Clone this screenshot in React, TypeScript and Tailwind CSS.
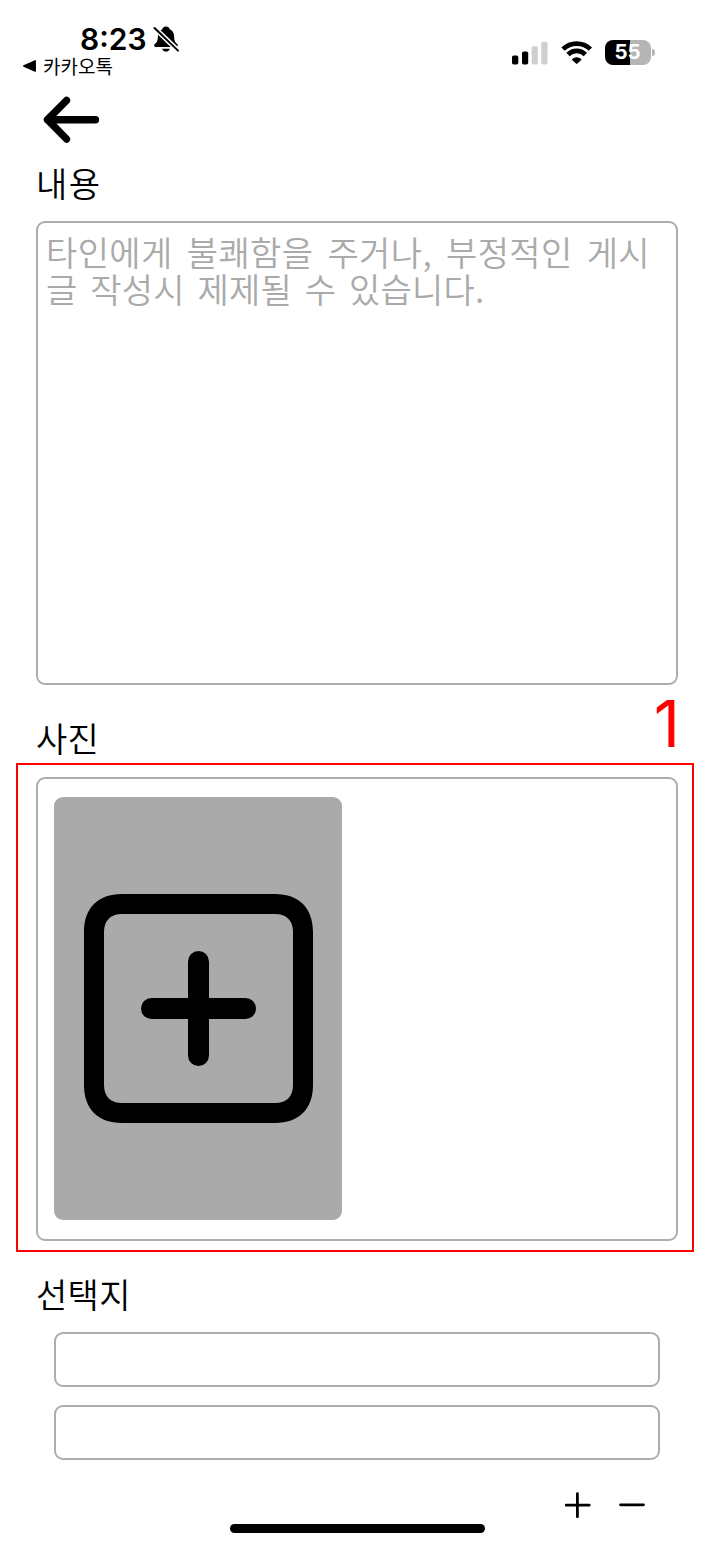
import type { ReactNode } from "react";

const BODY_FONT = "font-['Noto_Sans_CJK_KR',sans-serif]";

function BellOff() {
  return (
    <svg className="h-7 w-[26px]" viewBox="0 0 26 28" aria-hidden="true">
      <path
        d="M13 1.500c-1.900 0-3.400 1.100-3.700 2.700C6.300 5.500 5 8 4.900 11.200c-.1 4.400-.9 5.800-2.600 7.400-.9.900-1.100 1.500-1.100 2 0 .9.700 1.400 1.600 1.400h20.400c.9 0 1.600-.5 1.600-1.400 0-.5-.2-1.100-1.100-2-1.700-1.600-2.500-3-2.600-7.400C21 8 19.700 5.500 16.700 4.200 16.400 2.600 14.900 1.500 13 1.500zM9.200 23.700h7.600c-.4 1.700-1.900 2.900-3.800 2.900s-3.400-1.200-3.800-2.900z"
        fill="black"
      />
      <path d="M0 1.500 26 26.500" stroke="white" strokeWidth="5" />
      <path d="M1.500 3 25 25.600" stroke="black" strokeWidth="2" strokeLinecap="round" />
    </svg>
  );
}

function Signal() {
  return (
    <svg className="h-6 w-9" viewBox="0 0 36 24" aria-hidden="true">
      <rect x="0" y="14.500" width="6.300" height="9" rx="1.700" fill="black" />
      <rect x="10" y="10.500" width="6.200" height="13" rx="1.700" fill="black" />
      <rect x="19.700" y="5.300" width="6.200" height="18.200" rx="1.700" fill="#cfcfcf" />
      <rect x="29.300" y="0.700" width="6.200" height="22.800" rx="1.700" fill="#cfcfcf" />
    </svg>
  );
}

function Wifi() {
  return (
    <svg className="h-6 w-8" viewBox="0 0 32 24" aria-hidden="true">
      <g fill="none" stroke="black" strokeWidth="4.600">
        <path d="M2 8.200a19.500 19.500 0 0 1 27.400 0" />
        <path d="M7 13.500a12.300 12.300 0 0 1 17.400 0" />
      </g>
      <path d="M11.200 18a6.400 6.400 0 0 1 9 0c.3.300.3.600 0 .9l-3.800 3.700c-.4.400-1 .400-1.400 0l-3.800-3.700c-.3-.3-.3-.6 0-.9z" fill="black" />
    </svg>
  );
}

function Battery() {
  return (
    <div className="flex items-center gap-[1px]">
      <div className="flex h-[25px] w-[46px] items-center justify-center rounded-[8px] bg-[linear-gradient(90deg,#000_54%,#b5b5b5_54%)] pr-px font-[Inter,sans-serif] text-[20.500px] font-bold leading-none text-white">
        55
      </div>
      <div className="h-[7px] w-[2.500px] rounded-r-full bg-[#b5b5b5]" />
    </div>
  );
}

function StatusBar() {
  return (
    <div className="flex h-[88px] justify-between">
      <div className="flex flex-col pl-[22px] pt-[25px]">
        <div className="flex h-7 items-center gap-[6px] pl-[58px]">
          <span className="font-[Inter,sans-serif] text-[30px] font-semibold leading-7">8:23</span>
          <BellOff />
        </div>
        <div className="flex h-[26px] items-center gap-[6px]">
          <svg className="h-[14px] w-[15px]" viewBox="0 0 15 14" aria-hidden="true">
            <path d="M1.800 7 13.200 1.900v10.200z" fill="black" stroke="black" strokeWidth="1.500" strokeLinejoin="round" />
          </svg>
          <span className={`${BODY_FONT} text-[19px] leading-[26px]`}>카카오톡</span>
        </div>
      </div>
      <div className="mt-10 flex h-[25px] w-[202px] items-center">
        <Signal />
        <div className="ml-[13px] flex"><Wifi /></div>
        <div className="ml-3"><Battery /></div>
      </div>
    </div>
  );
}

function Label({ children }: { children: ReactNode }) {
  return <h2 className={`${BODY_FONT} h-9 text-[34px] font-[350] leading-[34px] tracking-[0.3px]`}>{children}</h2>;
}

function AddPhoto() {
  return (
    <button className="flex h-[423px] w-72 items-center justify-center rounded-[9px] bg-[#aaaaaa]" aria-label="사진 추가">
      <svg className="size-[229px]" viewBox="0 0 229 229" aria-hidden="true">
        <path
          fillRule="evenodd"
          d="M38 0H191C215 0 229 14 229 38V191C229 215 215 229 191 229H38C14 229 0 215 0 191V38C0 14 14 0 38 0ZM38 20C26 20 20 27 20 38V191C20 202 26 209 38 209H191C203 209 209 202 209 191V38C209 27 203 20 191 20Z"
        />
        <path d="M114.500 67.500v94M67.500 114.500h94" stroke="black" strokeWidth="21" strokeLinecap="round" />
      </svg>
    </button>
  );
}

export default function App() {
  return (
    <main className="flex h-[1547px] w-[714px] flex-col overflow-hidden bg-white text-black">
      <StatusBar />
      <header className="flex h-[78px] pl-[43px] pt-[8px]">
        <svg className="h-[48px] w-[57px]" viewBox="0 0 57 48" aria-hidden="true">
          <path d="M23.500 4.500 4.500 23.700 23.500 43M4.500 23.700h48" fill="none" stroke="black" strokeWidth="7.400" strokeLinecap="round" strokeLinejoin="round" />
        </svg>
      </header>

      <section className="flex flex-col px-9">
        <Label><span className="tracking-[1.500px]">내용</span></Label>
        <div className={`${BODY_FONT} mt-[19px] h-[464px] rounded-[9px] border-2 border-[#adadad] px-2 pt-[11px] text-[34px] font-[350] leading-[36.500px] text-[#aaaaaa]`}>
          <p className="whitespace-nowrap tracking-[0.4px] [word-spacing:6px]">타인에게 불쾌함을 주거나, 부정적인 게시</p>
          <p className="whitespace-nowrap tracking-[0.200px] [word-spacing:5px]">글 작성시 제제될 수 있습니다.</p>
        </div>
      </section>

      <section className="mt-9 flex flex-col px-9">
        <Label>사진</Label>
        <div className="relative mt-5 h-[464px] rounded-[9px] border-2 border-[#adadad] pl-4 pt-[18px]">
          <AddPhoto />
          <div className="pointer-events-none absolute -bottom-[13px] -left-[22px] -right-[18px] -top-4 border-2 border-[#ff0000]" />
          <span className="absolute -top-[87px] right-[-4px] font-[Inter,sans-serif] text-[64.500px] leading-[65px] text-[#ff0000]">1</span>
        </div>
      </section>

      <section className="mt-9 flex flex-col px-9">
        <Label>선택지</Label>
        <div className="mt-[19px] flex flex-col gap-[18px] px-[18px]">
          <input className="h-[55px] rounded-[9px] border-2 border-[#adadad]" aria-label="선택지 1" />
          <input className="h-[55px] rounded-[9px] border-2 border-[#adadad]" aria-label="선택지 2" />
        </div>
      </section>

      <div className="mt-8 flex justify-end gap-[28px] pr-[69px]">
        <svg className="size-[26px]" viewBox="0 0 26 26" aria-hidden="true">
          <path d="M12.400 1.700v23M1.200 13.200h23" stroke="black" strokeWidth="2.800" strokeLinecap="round" />
        </svg>
        <svg className="size-[26px]" viewBox="0 0 26 26" aria-hidden="true">
          <path d="M1.500 12.800h23" stroke="black" strokeWidth="2.800" strokeLinecap="round" />
        </svg>
      </div>
      <div className="ml-[230px] mt-[6px] h-[9px] w-[255px] rounded-full bg-black" />
    </main>
  );
}
